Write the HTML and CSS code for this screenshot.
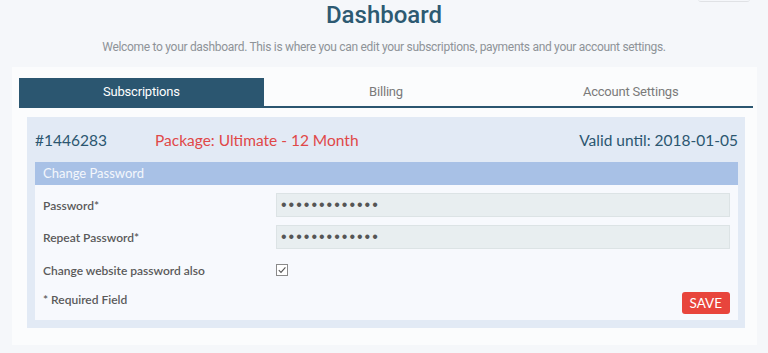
FILE: index.html
```html
<!DOCTYPE html>
<html lang="en">
<head>
    <meta charset="UTF-8">
    <title>Dashboard</title>
    <link rel="stylesheet" href="styles.css">
</head>
<body>
    <div class="top-btn"></div>
    <header class="page-head">
        <h1>Dashboard</h1>
        <p>Welcome to your dashboard. This is where you can edit your subscriptions, payments and your account settings.</p>
    </header>
    <main class="panel">
        <nav class="tabs">
            <a class="tab active">Subscriptions</a>
            <a class="tab">Billing</a>
            <a class="tab">Account Settings</a>
        </nav>
        <section class="sub-card">
            <div class="sub-head">
                <span class="sub-id">#1446283</span>
                <span class="sub-package">Package: Ultimate - 12 Month</span>
                <span class="sub-valid">Valid until: 2018-01-05</span>
            </div>
            <div class="box">
                <div class="box-title">Change Password</div>
                <form class="pw-form">
                    <label>Password*</label>
                    <input type="password" class="pw-input" value="abcdefghijklm">
                    <label>Repeat Password*</label>
                    <input type="password" class="pw-input" value="abcdefghijklm">
                    <label>Change website password also</label>
                    <span class="check">
                        <svg viewBox="0 0 12 12" width="12" height="12">
                            <rect x="0.5" y="0.5" width="11" height="11" fill="#fff" stroke="#8a8a8a"/>
                            <path d="M2.8 6.2 L5 8.4 L9.4 3.4" fill="none" stroke="#555" stroke-width="1.1"/>
                        </svg>
                    </span>
                    <label class="req">* Required Field</label>
                    <div class="actions"><button type="button" class="save">SAVE</button></div>
                </form>
            </div>
        </section>
    </main>
</body>
</html>
```

FILE: styles.css
```css
body {
    margin: 0;
    background-color: #f5f7fa;
    font-family: 'Open Sans', Arial, sans-serif;
    position: relative;
}

.top-btn {
    position: absolute;
    top: -20px;
    right: 18px;
    width: 52px;
    height: 21px;
    border-radius: 3px;
    border-bottom: 1px solid #e0e2e5;
}

.page-head {
    text-align: center;
}
.page-head h1 {
    margin: 0;
    padding-top: 1px;
    font-family: Roboto, Arial, sans-serif;
    font-weight: 500;
    font-size: 24px;
    line-height: 28px;
    color: #2d5a72;
}
.page-head p {
    margin: 10px 0 0;
    font-family: Roboto, Arial, sans-serif;
    font-size: 12px;
    letter-spacing: -0.3px;
    line-height: 16px;
    color: #8e9398;
}

.panel {
    margin: 12px 11px 8px 12px;
    padding: 11px 4px 17px 7px;
    background-color: #fbfcfd;
}

.tabs {
    display: flex;
    border-bottom: 2px solid #2b5670;
}
.tab {
    flex: 1;
    text-align: center;
    height: 28px;
    line-height: 28px;
    font-family: Roboto, Arial, sans-serif;
    font-size: 13px;
    letter-spacing: -0.2px;
    color: #7a7a7a;
}
.tab.active {
    background-color: #2b5670;
    color: #fff;
}

.sub-card {
    margin: 9px 8px 0;
    padding: 0 7px 8px 8px;
    background-color: #e2eaf5;
}
.sub-head {
    display: flex;
    align-items: center;
    height: 45px;
    font-family: Lato, Arial, sans-serif;
    font-size: 15.5px;
    color: #2b5670;
}
.sub-id {
    width: 120px;
}
.sub-package {
    color: #e04848;
    flex: 1;
}

.box {
    background-color: #f7f9fd;
}
.box-title {
    background-color: #a8c1e6;
    color: #f4f7fc;
    height: 23px;
    line-height: 23px;
    padding: 0 8px;
    font-family: Lato, Arial, sans-serif;
    font-size: 13px;
}

.pw-form {
    display: grid;
    grid-template-columns: 233px 1fr;
    grid-template-rows: 24px 24px 26px 22px;
    row-gap: 8px;
    align-items: center;
    padding: 8px 8px 7px;
}
.pw-form label {
    font-family: Lato, Arial, sans-serif;
    font-weight: 600;
    font-size: 12px;
    color: #5a5a5a;
}
.pw-form label.req {
    align-self: start;
    padding-top: 1px;
}
.pw-input {
    box-sizing: border-box;
    height: 24px;
    width: 100%;
    margin: 0;
    padding: 0 4px;
    border: 1px solid #dce3e5;
    background-color: #e8eef0;
    color: #555;
    font-size: 16px;
    letter-spacing: 2px;
}
.check {
    display: flex;
    align-items: center;
    height: 12px;
}

.actions {
    text-align: right;
}
.save {
    height: 22px;
    padding: 0 8px;
    border: none;
    border-radius: 3px;
    background-color: #e8453c;
    color: #fff;
    font-family: Lato, Arial, sans-serif;
    font-size: 13.5px;
}
```
